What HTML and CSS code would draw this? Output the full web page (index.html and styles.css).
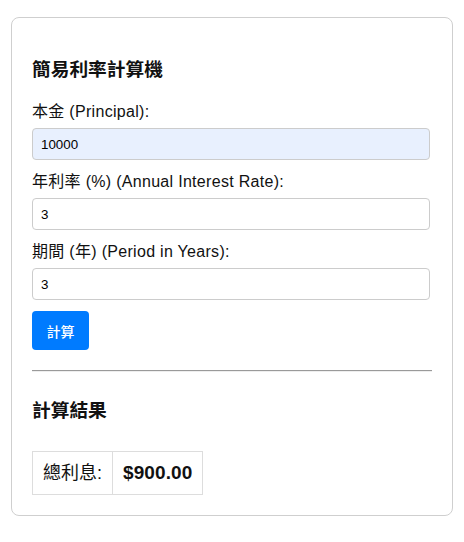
FILE: index.html
```html
<!DOCTYPE html>
<html lang="zh-Hant">
<head>
<meta charset="utf-8">
<title>簡易利率計算機</title>
<link rel="stylesheet" href="styles.css">
</head>
<body>
<div class="card">
  <h3 class="title">簡易利率計算機</h3>
  <form class="form">
    <label class="label" for="principal">本金 (Principal):</label>
    <input class="input autofill" id="principal" type="text" value="10000">
    <label class="label" for="rate">年利率 (%) (Annual Interest Rate):</label>
    <input class="input" id="rate" type="text" value="3">
    <label class="label" for="years">期間 (年) (Period in Years):</label>
    <input class="input" id="years" type="text" value="3">
    <button class="btn" type="button">計算</button>
  </form>
  <hr class="divider">
  <h3 class="title result-title">計算結果</h3>
  <table class="result">
    <tr>
      <td class="cell">總利息:</td>
      <td class="cell value">$900.00</td>
    </tr>
  </table>
</div>
</body>
</html>
```
FILE: styles.css
```css
* { box-sizing: border-box; }
body {
  margin: 0;
  padding: 17px 11px 0 11px;
  font-family: "Liberation Sans", "Noto Sans CJK TC", sans-serif;
  color: #111;
  background: #fff;
}
.card {
  width: 442px;
  border: 1px solid #cfcfcf;
  border-radius: 8px;
  padding: 20px;
}
.title {
  margin: 21px 0 21px 0;
  font-size: 18.72px;
  line-height: 22px;
  font-weight: bold;
  color: #111;
}
.form {
  display: flex;
  flex-direction: column;
  align-items: flex-start;
}
.label {
  display: block;
  font-size: 16px;
  line-height: 20px;
  letter-spacing: 0.3px;
  margin-bottom: 6px;
  color: #111;
}
.input {
  display: block;
  width: 398px;
  height: 32px;
  padding: 0 8px;
  margin: 0 0 12px 0;
  border: 1px solid #cccccc;
  border-radius: 4px;
  font-family: "Liberation Sans", "Noto Sans CJK TC", sans-serif;
  font-size: 13.33px;
  color: #000;
  background: #fff;
}
.input.autofill { background: #e8f0fe; }
.btn {
  margin-top: -1px;
  height: 39px;
  width: 57px;
  padding: 0;
  border: none;
  border-radius: 4px;
  background: #007bff;
  color: #fff;
  font-family: "Liberation Sans", "Noto Sans CJK TC", sans-serif;
  font-size: 14px;
  font-weight: 500;
}
.divider {
  margin: 20px 0 0 0;
  border: 0;
  border-top: 1px solid #9a9a9a;
  border-bottom: 1px solid #eee;
  height: 0;
}
.result-title { margin: 28px 0 29px 0; }
.result {
  border-collapse: collapse;
}
.cell {
  border: 1px solid #ddd;
  padding: 10px;
  font-size: 18px;
  line-height: 22px;
}
.value { font-size: 19px; font-weight: bold; letter-spacing: 0.1px; }
```
